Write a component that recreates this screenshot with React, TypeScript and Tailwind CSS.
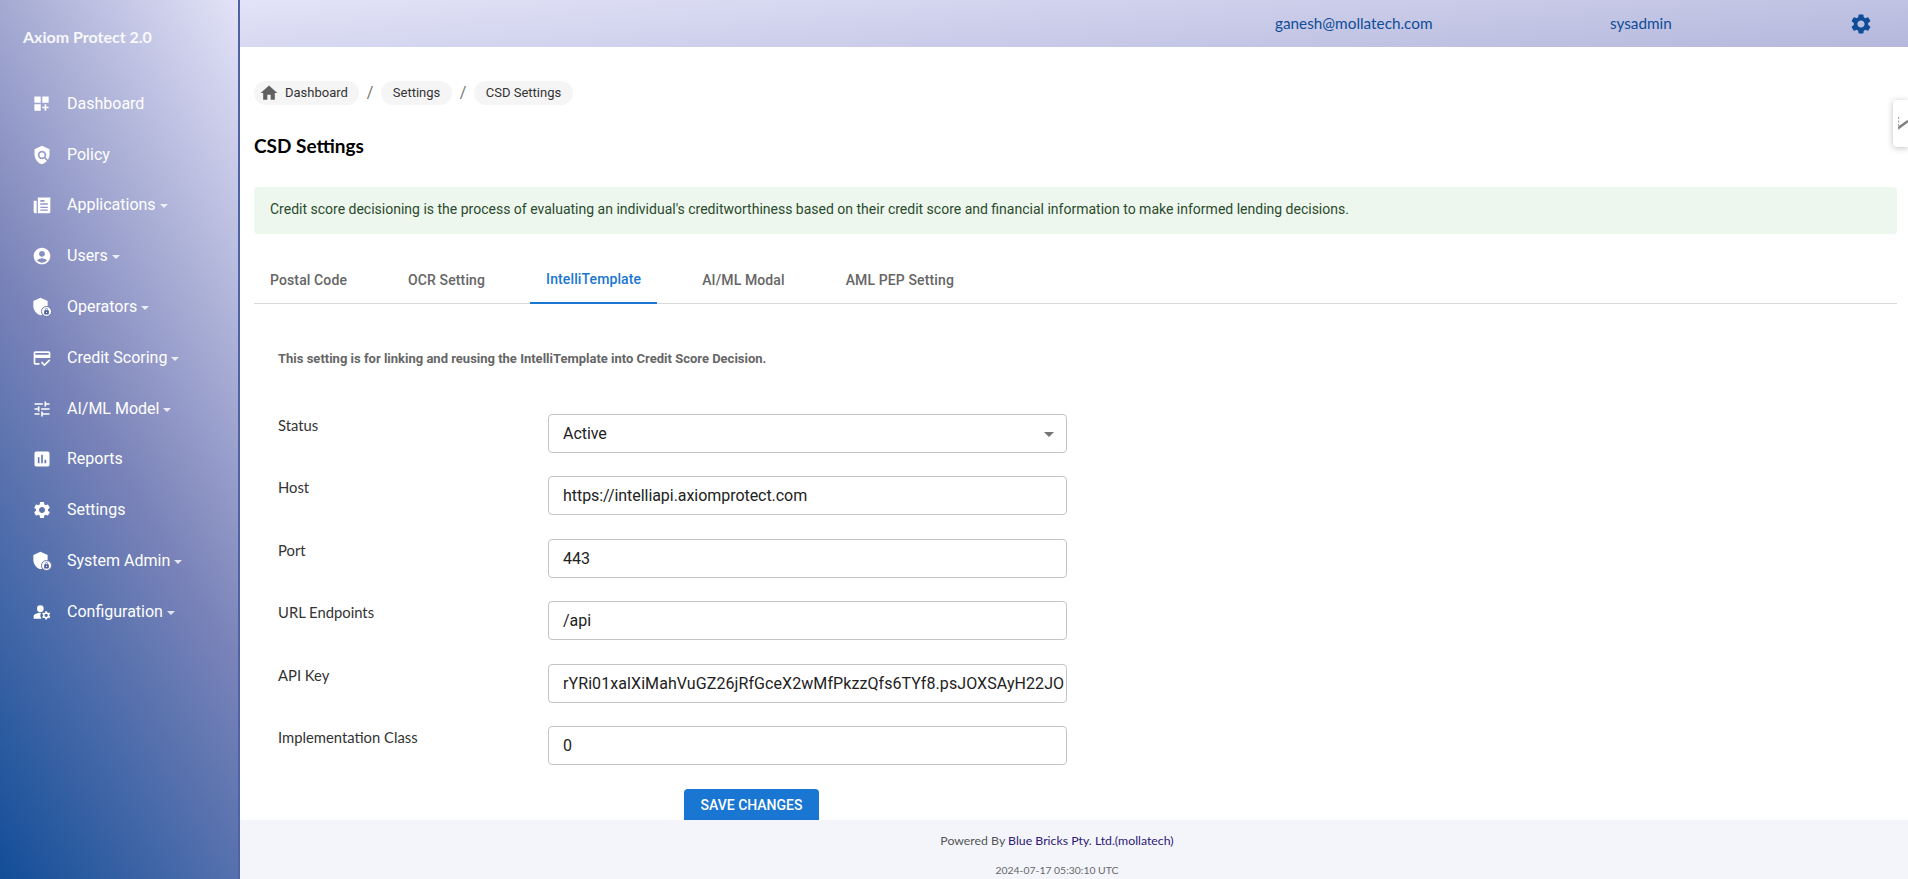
import type { ReactNode } from 'react'
import {
  MdDashboardCustomize,
  MdPolicy,
  MdAccountCircle,
  MdOutlineCreditScore,
  MdOutlineTune,
  MdAssessment,
  MdSettings,
  MdManageAccounts,
  MdHome,
  MdShield,
  MdLock,
} from 'react-icons/md'

const jost = "font-['Lato','Liberation_Sans',sans-serif]"
const roboto = "font-['Roboto','Liberation_Sans',sans-serif]"

function ShieldLock() {
  return (
    <span className="relative block h-[20px] w-[20px]">
      <MdShield className="absolute -left-[1px] top-0 text-[19px]" />
      <span className="absolute bottom-0 right-0 flex h-[11px] w-[11px] items-center justify-center rounded-full border border-[#6a74ae] bg-white">
        <MdLock className="text-[7px] text-[#4f5f9f]" />
      </span>
    </span>
  )
}

function PagesIcon() {
  return (
    <svg viewBox="0 0 24 24" className="h-[20px] w-[20px]" fill="currentColor">
      <path
        fillRule="evenodd"
        d="M7 3h15v17a2 2 0 0 1-2 2H7zM10 6v2h5V6zM10 10v1.7h9V10zM10 14v1.5h9V14zM10 17.5V19h9v-1.5z"
      />
      <path d="M2 7h3.6v15H4a2 2 0 0 1-2-2z" />
    </svg>
  )
}

const navItems: { label: string; icon: ReactNode; caret?: boolean }[] = [
  { label: 'Dashboard', icon: <MdDashboardCustomize className="text-[19px]" /> },
  { label: 'Policy', icon: <MdPolicy className="text-[20px]" /> },
  { label: 'Applications', icon: <PagesIcon />, caret: true },
  { label: 'Users', icon: <MdAccountCircle className="text-[20px]" />, caret: true },
  { label: 'Operators', icon: <ShieldLock />, caret: true },
  { label: 'Credit Scoring', icon: <MdOutlineCreditScore className="text-[20px]" />, caret: true },
  { label: 'AI/ML Model', icon: <MdOutlineTune className="text-[20px]" />, caret: true },
  { label: 'Reports', icon: <MdAssessment className="text-[20px]" /> },
  { label: 'Settings', icon: <MdSettings className="text-[20px]" /> },
  { label: 'System Admin', icon: <ShieldLock />, caret: true },
  { label: 'Configuration', icon: <MdManageAccounts className="text-[20px]" />, caret: true },
]

const tabs = ['Postal Code', 'OCR Setting', 'IntelliTemplate', 'AI/ML Modal', 'AML PEP Setting']

const fields = [
  { label: 'Host', value: 'https://intelliapi.axiomprotect.com' },
  { label: 'Port', value: '443' },
  { label: 'URL Endpoints', value: '/api' },
  { label: 'API Key', value: 'rYRi01xalXiMahVuGZ26jRfGceX2wMfPkzzQfs6TYf8.psJOXSAyH22JO' },
  { label: 'Implementation Class', value: '0' },
]

function Row({ label, children }: { label: string; children: ReactNode }) {
  return (
    <div className="mb-[23.4px] flex">
      <label className={`${jost} w-[270px] pt-[2px] text-[14.8px] leading-[18px] text-[#333]`}>{label}</label>
      {children}
    </div>
  )
}

export default function App() {
  return (
    <div className={`${roboto} flex h-[879px] w-[1908px] overflow-hidden bg-white`}>
      <aside className="h-full w-[240px] shrink-0 border-r-2 border-[#4f62a6] bg-[linear-gradient(59deg,#124e98_0%,#7a83b9_48%,#e3e3f8_100%)] text-white">
        <div className={`${jost} pl-[23px] pt-[27px] text-[16px] font-bold leading-[20px] text-white/90`}>Axiom Protect 2.0</div>
        <nav className="pt-[31.4px]">
          {navItems.map((item) => (
            <div key={item.label} className="flex h-[50.8px] items-center pl-[32px]">
              <span className="flex w-[35px] shrink-0 items-center">{item.icon}</span>
              <span className="text-[16px] leading-[20px]">{item.label}</span>
              {item.caret ? (
                <span className="ml-[4px] mt-[2px] h-0 w-0 border-x-[4.5px] border-t-[4.5px] border-x-transparent border-t-white/80" />
              ) : null}
            </div>
          ))}
        </nav>
      </aside>

      <div className="flex min-w-0 flex-1 flex-col">
        <header className="flex h-[47px] shrink-0 items-center bg-[linear-gradient(175deg,#e3e3f8_0%,#b5b8dc_100%)] text-[#0f4c97]">
          <span className={`${jost} ml-[1035px] w-[335px] text-[15.3px]`}>ganesh@mollatech.com</span>
          <span className={`${jost} w-[239px] text-[15.3px]`}>sysadmin</span>
          <MdSettings className="text-[24px]" />
        </header>

        <main className="relative min-h-0 flex-1 overflow-hidden pl-[14px] pr-[11px]">
          <div className="flex items-center pt-[34px] text-[13px] text-[#333]">
            <span className="flex h-[24px] w-[105px] items-center rounded-full bg-[#f5f5f5] pl-[5px]">
              <MdHome className="mr-[6px] text-[20px] text-[#616161]" />
              Dashboard
            </span>
            <span className="w-[22px] text-center text-[16px] text-[#757575]">/</span>
            <span className="flex h-[24px] w-[71px] items-center justify-center rounded-full bg-[#f5f5f5]">Settings</span>
            <span className="w-[22px] text-center text-[16px] text-[#757575]">/</span>
            <span className="flex h-[24px] w-[99px] items-center justify-center rounded-full bg-[#f5f5f5]">CSD Settings</span>
          </div>

          <h1 className={`${jost} mt-[28px] text-[19px] font-bold leading-[26px] text-black`}>CSD Settings</h1>

          <div className="mt-[28px] flex h-[47px] items-center rounded-[4px] bg-[#edf7ed] pb-[2px] pl-[16px] text-[14px] text-[#2b4a2d]">
            Credit score decisioning is the process of evaluating an individual's creditworthiness based on their credit score and financial information to make informed lending decisions.
          </div>

          <div className="mt-[22px] flex h-[48px] gap-[29px] border-b border-[#d9d9d9]">
            {tabs.map((tab) => (
              <div
                key={tab}
                className={`flex h-[48px] items-center px-[16px] text-[14px] font-medium tracking-[0.12px] ${
                  tab === 'IntelliTemplate' ? 'border-b-2 border-[#1976d2] text-[#1976d2]' : 'text-[#666]'
                }`}
              >
                {tab}
              </div>
            ))}
          </div>

          <div className="pl-[24px]">
            <p className="mt-[47px] text-[13px] font-bold leading-[16px] text-[#666]">
              This setting is for linking and reusing the IntelliTemplate into Credit Score Decision.
            </p>

            <div className="mt-[47px] pb-[1px]">
              <Row label="Status">
                <div className="flex h-[39px] w-[519px] items-center justify-between rounded-[4px] border border-[#c4c4c4] pl-[14px] pr-[12px] pt-[1px] text-[16px] tracking-[-0.05px] text-[#222]">
                  Active
                  <span className="h-0 w-0 border-x-[5px] border-t-[5px] border-x-transparent border-t-[#757575]" />
                </div>
              </Row>
              {fields.map((field) => (
                <Row key={field.label} label={field.label}>
                  <input
                    readOnly
                    value={field.value}
                    className={`h-[39px] w-[519px] rounded-[4px] border border-[#c4c4c4] pl-[14px] text-[16px] text-[#222] outline-none ${
                      field.label === 'API Key' ? 'pr-[2px] tracking-[0.08px]' : 'pr-[14px] tracking-[-0.05px]'
                    }`}
                  />
                </Row>
              ))}
            </div>

            <button
              type="button"
              className="ml-[406px] flex h-[36px] w-[135px] items-center justify-center rounded-[4px] bg-[#1976d2] pb-[4px] text-[14px] font-medium text-white"
            >
              SAVE CHANGES
            </button>
          </div>

          <div className="absolute right-0 top-[53px] h-[47px] w-[15px] overflow-hidden rounded-l-[4px] bg-white pl-[5px] pt-[16px] shadow-[0_1px_6px_rgba(0,0,0,0.25)]">
            <svg viewBox="0 0 10 16" className="h-[16px] w-[10px]" fill="none">
              <path d="M0.5 1v14" stroke="#aaa" strokeWidth="1.5" strokeDasharray="2 1.5" />
              <path d="M0.5 12L10 5" stroke="#808080" strokeWidth="2.5" />
            </svg>
          </div>
        </main>

        <footer className="relative flex h-[59px] shrink-0 flex-col items-center bg-[#f4f5fa] pr-[34px] text-[12px]">
          <div className={`${jost} pt-[13px] text-[12.3px] leading-[16px] text-[#555]`}>
            Powered By <span className="text-[#2e1a78]">Blue Bricks Pty. Ltd.(mollatech)</span>
          </div>
          <div className={`${jost} pt-[14px] text-[10.4px] leading-[14px] text-[#666]`}>2024-07-17 05:30:10 UTC</div>
        </footer>
      </div>
    </div>
  )
}
